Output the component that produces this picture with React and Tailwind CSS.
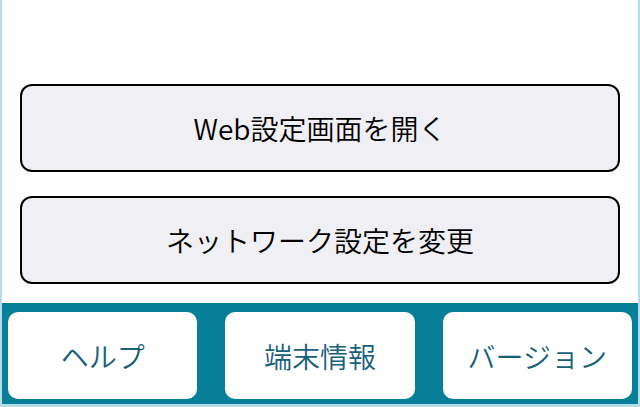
const mainActions = ['Web設定画面を開く', 'ネットワーク設定を変更'];
const footerItems = ['ヘルプ', '端末情報', 'バージョン'];

export default function App() {
  return (
    <div
      className="w-[640px] h-[407px] flex flex-col bg-white border-x-2 border-b-[3px] border-[#b6dce9] overflow-hidden"
      style={{ fontFamily: '"Noto Sans CJK JP", "Noto Sans", sans-serif' }}
    >
      <div className="flex-1 flex flex-col gap-[24px] px-[18px] pt-[84px]">
        {mainActions.map((label) => (
          <button
            key={label}
            className="h-[88px] w-full rounded-[12px] border-2 border-black bg-[#efeff4] text-[28px] font-[350] leading-none text-black"
          >
            {label}
          </button>
        ))}
      </div>

      <div className="h-[101px] bg-[#087f99] grid grid-cols-3 gap-[28px] px-[6px] pt-[9px] pb-[5px]">
        {footerItems.map((label) => (
          <button
            key={label}
            className="rounded-[10px] bg-white text-[28px] font-[350] leading-none text-[#17607b]"
          >
            {label}
          </button>
        ))}
      </div>
    </div>
  );
}
